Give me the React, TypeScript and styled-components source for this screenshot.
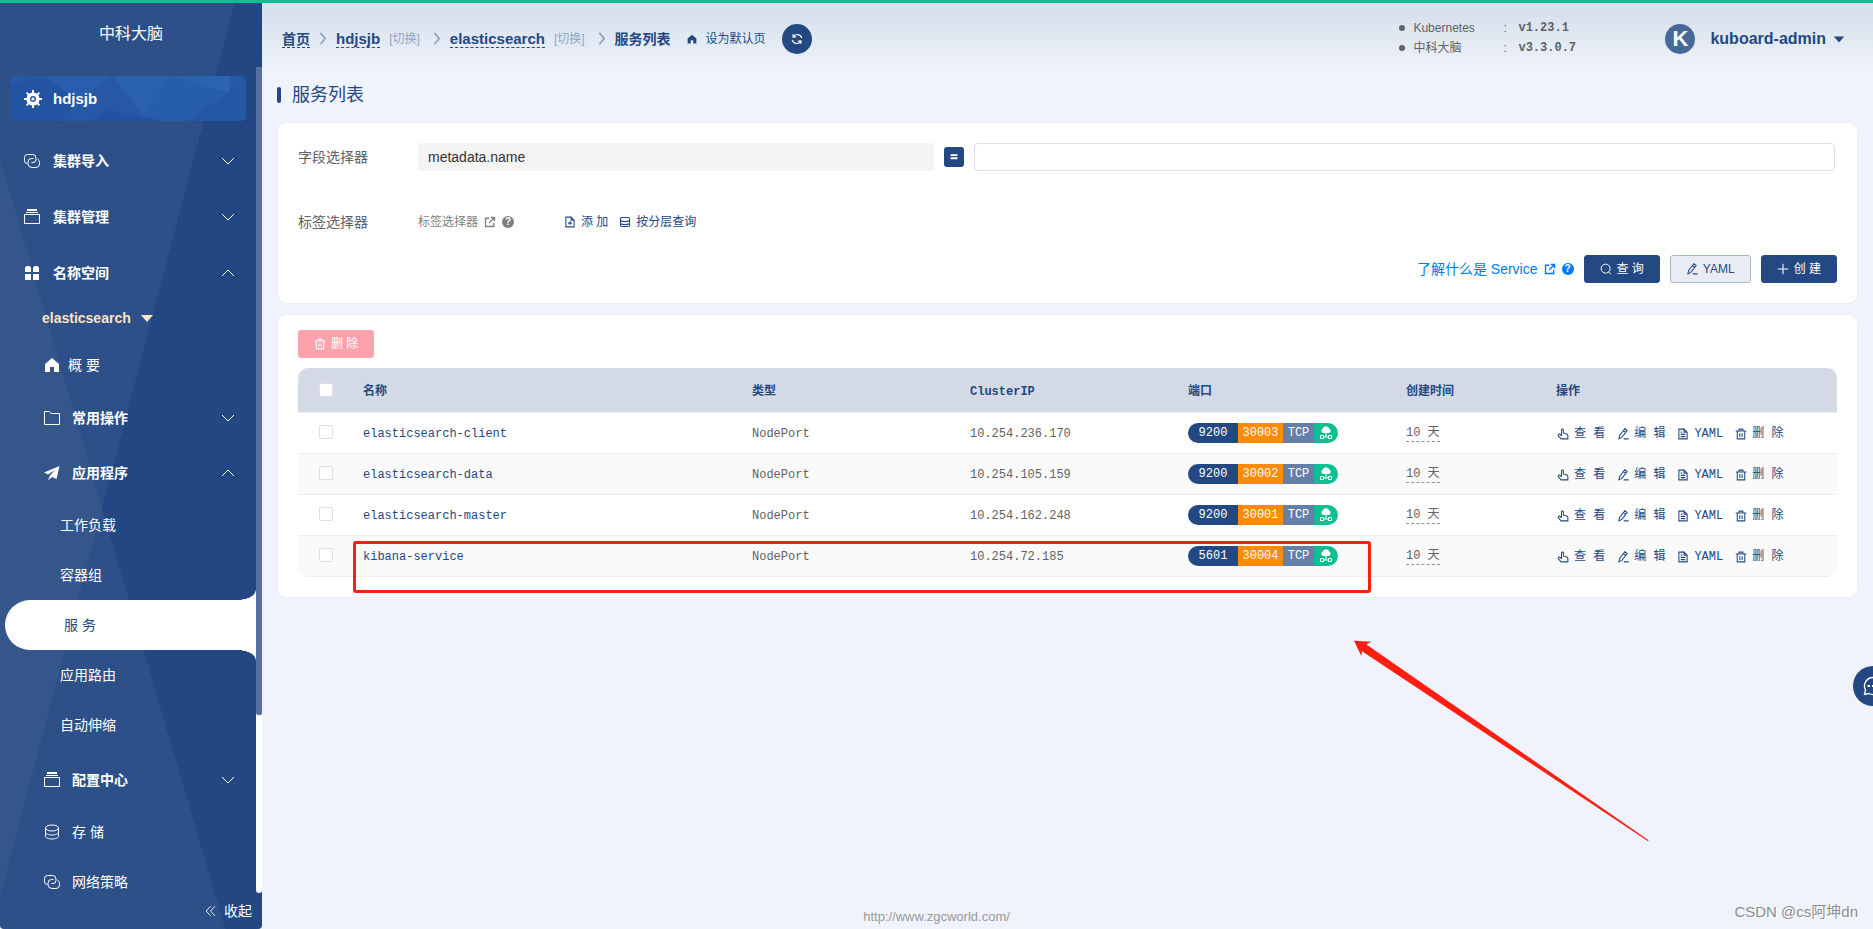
import React from "react";
import styled, { createGlobalStyle, css } from "styled-components";

const SANS = `"Liberation Sans", "Noto Sans CJK SC", sans-serif`;
const MONO = `"Liberation Mono", "Noto Sans CJK SC", monospace`;
const NAVY = "#234882";

const GlobalStyle = createGlobalStyle`
  *, *::before, *::after { box-sizing: border-box; }
  body {
    margin: 0;
    background: #f0f3fb;
    color: #606266;
    font: 14px/20px ${SANS};
  }
  button, input { font: inherit; color: inherit; }
  button { cursor: pointer; }
  a { color: inherit; text-decoration: none; }
  svg { display: block; flex: none; }
`;

/* ---------- icons ---------- */

const paths: Record<string, React.ReactNode> = {
  link: (
    <>
      <path d="M3.5 10.5H3.2A2.7 2.7 0 0 1 .5 7.8V4.5A3 3 0 0 1 3.5 1.5H8.5A3.5 3.5 0 0 1 12 5V6.5A3 3 0 0 1 9 9.5H7.5" />
      <path d="M9.5 5.5H7.5A3.5 3.5 0 0 0 4 9V10.5A4 4 0 0 0 8 14.5H12A3.5 3.5 0 0 0 15.5 11V9.5A4 4 0 0 0 13.5 6" />
    </>
  ),
  stack: (
    <>
      <path d="M3 1h10" strokeWidth="2" />
      <path d="M2 3.5h12M.5 5.5h15v9H.5z" />
    </>
  ),
  grid: (
    <path
      d="M1 7V2.5L2.5 1H5.500L7 2.500V7zM9 7V2.500L10.500 1H13.500L15 2.500V7zM1 9H7V15H1zM9 9H15V15H9z"
      fill="currentColor"
      stroke="none"
    />
  ),
  home: <path d="M8 1 15 7V15H10V10H6V15H1V7z" fill="currentColor" stroke="none" />,
  folder: <path d="M.5 1.500H5.500L7 3.500H15.500V14.500H.5z" />,
  plane: <path d="M15.500 1 0 7.500 4 9.500 11 5 6 10.500 4 15.500 8 12 12.500 14z" fill="currentColor" stroke="none" />,
  database: (
    <>
      <ellipse cx="8" cy="4" rx="6.500" ry="3" />
      <path d="M1.500 4V12C1.500 13.700 4.400 15 8 15S14.500 13.700 14.500 12V4M1.500 8C1.500 9.700 4.400 11 8 11S14.500 9.700 14.500 8" />
    </>
  ),
  down: <path d="M2 5 8 11 14 5" />,
  up: <path d="M2 11 8 5 14 11" />,
  fold: <path d="M7.500 2.500 2.500 8 7.500 13.500M12.500 2.500 7.500 8 12.500 13.500" />,
  caret: <path d="M2 5H14L8 12z" fill="currentColor" stroke="none" />,
  crumb: <path d="M5 1 10.500 7.500 5 14" strokeWidth="2" />,
  refresh: (
    <path
      d="M3.500 6.500V2.500M3.500 5.500A5.500 5.500 0 0 1 13.500 7M3.500 5.500H7M12.500 9.500V13.500M12.500 10.500A5.500 5.500 0 0 1 2.500 9M12.500 10.500H9"
      strokeWidth="1.300"
    />
  ),
  external: <path d="M7 3H2V14H13V9M9 2H14V7M14 2 7 9" strokeWidth="1.800" />,
  docPlus: <path d="M9.500 1.500H2.500V14.500H13.500V5.500L9.500 1.500V5.500H13.500M8 7V12M5.500 9.500H10.500" strokeWidth="1.400" />,
  layers: (
    <path
      d="M2 3.500Q2 2 3.500 2H12.500Q14 2 14 3.500V12.500Q14 14 12.500 14H3.500Q2 14 2 12.500zM2 6.500Q8 8.500 14 6.500M2 10.500Q8 12.500 14 10.500"
      strokeWidth="1.500"
    />
  ),
  search: (
    <path
      d="M7.500 1.500A6 6 0 1 0 7.500 13.500A6 6 0 1 0 7.500 1.500M11.500 12 14.500 15"
      strokeWidth="1.300"
    />
  ),
  pen: <path d="M10.500 1 13.500 3.500 6.500 12.500 2.500 14.500 3.500 10zM8.500 3.500 11.500 6M9 14.500H15.500" strokeWidth="1.400" />,
  plus: <path d="M8 1V15M1 8H15" strokeWidth="1.400" />,
  hand: (
    <path
      d="M6 10.500V2.500Q6 1.200 7.200 1.200T8.500 2.500V6.500L13 8Q14.500 8.500 14.500 10V14.500H5.500L1.500 10Q1.500 8 3.500 8L6 10.500"
      strokeWidth="1.400"
    />
  ),
  doc: <path d="M9.500 1.500H2.500V14.500H13.500V5.500L9.500 1.500V5.500H13.500M5 8.500H11M5 11.500H11M5 5.500H7" strokeWidth="1.400" />,
  trash: <path d="M1 4H15M5.500 4V1.500H10.500V4M3 4V14.500H13V4M6.500 7V12M9.500 7V12" strokeWidth="1.400" />,
  equals: <path d="M2.500 5H13.500M2.500 10H13.500" strokeWidth="3" />,
};

const Icon = ({ name, size = 16 }: { name: string; size?: number }) => (
  <svg width={size} height={size} viewBox="0 0 16 16" fill="none" stroke="currentColor" strokeWidth="1" aria-hidden="true">
    {paths[name]}
  </svg>
);

const Wheel = () => (
  <svg width="18" height="18" viewBox="0 0 18 18" fill="none" stroke="#fff" aria-hidden="true">
    <path d="M9 0V18M0 9H18M2.600 2.600 15.400 15.400M15.400 2.600 2.600 15.400" strokeWidth="2" />
    <circle cx="9" cy="9" r="4.800" fill="#2558a6" strokeWidth="3.600" />
    <circle cx="9" cy="9" r="1.600" fill="#fff" stroke="none" />
  </svg>
);

const CloudNodes = () => (
  <svg width="14" height="14" viewBox="0 0 14 14" fill="#fff" aria-hidden="true">
    <path d="M4.500 7A2.200 2.200 0 0 1 3.600 2.800 3.500 3.500 0 0 1 10.400 2.800 2.200 2.200 0 0 1 9.500 7z" />
    <path d="M7 7V11M4 11H10M1.500 9.500H4.500V12.500H1.500zM9.500 9.500H12.500V12.500H9.500z" fill="none" stroke="#fff" />
  </svg>
);

/* ---------- page frame ---------- */

const Page = styled.div`
  position: relative;
  display: flex;
  flex-direction: column;
  height: 100vh;
  overflow: hidden;
`;

const TopLine = styled.div`
  flex: none;
  height: 3px;
  background: #10bf91;
`;

const Body = styled.div`
  flex: 1;
  min-height: 0;
  display: flex;
`;

/* ---------- sidebar ---------- */

const Sidebar = styled.aside`
  flex: none;
  width: 262px;
  display: flex;
  flex-direction: column;
  color: #fff;
  border-radius: 0 0 4px 4px;
  background: conic-gradient(
    at 102px 505px,
    #2c5087 0 14.7deg,
    #234782 14.7deg 163.7deg,
    #2c5087 163.7deg 194.7deg,
    #34568b 194.7deg 343.7deg,
    #2c5087 343.7deg 360deg
  );
`;

const Brand = styled.div`
  height: 64px;
  line-height: 62px;
  text-align: center;
  font-size: 16px;
`;

const MenuFrame = styled.div`
  flex: 1;
  min-height: 0;
  display: flex;
`;

const Menu = styled.nav`
  flex: 1;
  overflow: hidden;
  padding-top: 9px;
`;

const ScrollTrack = styled.div`
  flex: none;
  width: 6px;
  border-radius: 3px;
  background: #fff;
`;

const ScrollThumb = styled.div`
  height: 78.5%;
  border-radius: 2px;
  background: #57719e;
`;

const ClusterLink = styled.a`
  position: relative;
  display: flex;
  align-items: center;
  height: 45px;
  margin: 0 10px 12px;
  padding: 0 14px;
  border-radius: 5px;
  overflow: hidden;
  font-size: 15px;
  font-weight: 700;
  background: #2659a7;
`;

const Facets = styled.svg`
  position: absolute;
  inset: 0;
  width: 100%;
  height: 100%;
  opacity: 0.7;
`;

const ClusterLabel = styled.span`
  position: relative;
  display: flex;
  align-items: center;
  gap: 11px;
`;

const menuItem = css`
  display: flex;
  align-items: center;
  width: 100%;
  border: 0;
  background: none;
  text-align: left;
`;

const Group = styled.button<{ $nested?: boolean }>`
  ${menuItem}
  height: ${(p) => (p.$nested ? 55 : 56)}px;
  padding: 0 20px 0 ${(p) => (p.$nested ? 44 : 24)}px;
  gap: ${(p) => (p.$nested ? 12 : 13)}px;
  font-weight: 700;

  & > span {
    flex: 1;
  }
`;

const NamespaceSwitch = styled.button`
  ${menuItem}
  gap: 8px;
  height: 39px;
  padding: 0 42px 5px;
  font-weight: 700;
  color: #ffe3c8;
`;

const Leaf = styled.a<{ $gap?: number }>`
  ${menuItem}
  gap: ${(p) => p.$gap ?? 12}px;
  height: 50px;
  padding-left: 44px;
`;

const SubMenu = styled.div`
  padding-bottom: 2px;
`;

const SubLeaf = styled.a`
  ${menuItem}
  height: 50px;
  padding-left: 60px;
`;

const ActiveLeaf = styled(SubLeaf)`
  position: relative;
  width: auto;
  margin-left: 5px;
  padding-left: 59px;
  border-radius: 25px 0 0 25px;
  background: #fff;
  color: ${NAVY};

  &::before,
  &::after {
    content: "";
    position: absolute;
    right: 0;
    width: 18px;
    height: 10px;
  }
  &::before {
    bottom: 100%;
    background: radial-gradient(ellipse 18px 10px at 0 0, transparent 96%, #fff);
  }
  &::after {
    top: 100%;
    background: radial-gradient(ellipse 18px 10px at 0 100%, transparent 96%, #fff);
  }
`;

const FoldButton = styled.button`
  ${menuItem}
  flex: none;
  justify-content: flex-end;
  gap: 6px;
  height: 36px;
  padding: 0 10px 0 0;
`;

/* ---------- header ---------- */

const Main = styled.main`
  flex: 1;
  min-width: 0;
  display: flex;
  flex-direction: column;
`;

const Header = styled.header`
  flex: none;
  display: flex;
  align-items: center;
  height: 72px;
  padding: 0 27px 0 20px;
  color: ${NAVY};
  background: linear-gradient(#d3dfeb, #f0f3fb);
`;

const Crumbs = styled.nav`
  display: flex;
  align-items: center;
  gap: 10px;
  margin-right: auto;
  white-space: nowrap;
`;

const CrumbSep = styled.span`
  margin: 0 -4px;
  color: #8fa5c6;
`;

const Crumb = styled.a<{ $latin?: boolean }>`
  font-size: ${(p) => (p.$latin ? 15 : 14)}px;
  line-height: 16px;
  font-weight: 700;
  border-bottom: 1px dashed ${NAVY};
`;

const CrumbCurrent = styled.span`
  font-weight: 700;
`;

const SwitchButton = styled.button`
  padding: 0;
  margin: 0 4px 0 -1px;
  border: 0;
  background: none;
  font-size: 12px;
  color: #8fa5c6;
`;

const DefaultPageButton = styled.button`
  display: flex;
  align-items: center;
  gap: 9px;
  padding: 0;
  margin: 0 6px;
  border: 0;
  background: none;
  font-size: 12px;
`;

const RoundButton = styled.button`
  display: grid;
  place-items: center;
  width: 30px;
  height: 30px;
  padding: 0;
  border: 0;
  border-radius: 50%;
  background: ${NAVY};
  color: #fff;
`;

const Versions = styled.ul`
  margin: 0;
  padding: 0 0 2px;
  list-style: none;
  font-size: 12px;
  color: #606266;
`;

const VersionRow = styled.li`
  display: grid;
  grid-template-columns: 14px 90px 15px 147px;
  align-items: center;

  &::before {
    content: "";
    width: 6px;
    height: 6px;
    border-radius: 50%;
    background: #606266;
  }
  & > b {
    font-family: ${MONO};
  }
`;

const UserButton = styled.button`
  display: flex;
  align-items: center;
  padding: 0;
  border: 0;
  background: none;
  font-size: 16px;
  font-weight: 700;
  color: ${NAVY};

  & > svg {
    margin-left: 6px;
  }
`;

const Avatar = styled.span`
  width: 30px;
  height: 30px;
  margin-right: 15px;
  border-radius: 50%;
  background: #486998;
  color: #fff;
  font-size: 22px;
  line-height: 30px;
  text-align: center;
`;

/* ---------- content ---------- */

const Content = styled.div`
  flex: 1;
  display: flex;
  flex-direction: column;
  gap: 10px;
  padding: 0 15px;
`;

const Title = styled.h1`
  display: flex;
  align-items: center;
  gap: 11px;
  height: 40px;
  margin: 0 0 -3px;
  font-size: 18px;
  font-weight: 400;
  color: ${NAVY};

  &::before {
    content: "";
    width: 4px;
    height: 16px;
    border-radius: 2px;
    background: ${NAVY};
  }
`;

const Card = styled.section<{ $top?: number }>`
  padding: ${(p) => p.$top ?? 20}px 20px 20px;
  border: 1px solid #ebeef5;
  border-radius: 10px;
  background: #fff;
`;

const FormRow = styled.div<{ $after: number }>`
  display: flex;
  align-items: center;
  height: 28px;
  margin-bottom: ${(p) => p.$after}px;
  padding-right: 2px;
`;

const Label = styled.label`
  flex: none;
  width: 120px;
`;

const FieldPair = styled.div`
  flex: 1;
  display: grid;
  grid-template-columns: minmax(0, 3fr) 20px minmax(0, 5fr);
  align-items: center;
  gap: 10px;
`;

const FieldInput = styled.input`
  height: 28px;
  padding: 0 10px;
  border: 0;
  border-radius: 4px;
  background: #f4f4f4;
  color: #333;
`;

const OperatorButton = styled.button`
  display: grid;
  place-items: center;
  width: 20px;
  height: 20px;
  padding: 0;
  border: 0;
  border-radius: 3px;
  background: ${NAVY};
  color: #fff;
`;

const ValueInput = styled.input`
  height: 28px;
  padding: 0 10px;
  border: 1px solid #dcdfe6;
  border-radius: 4px;
  background: #fff;
`;

const DocLink = styled.a<{ $blue?: boolean }>`
  display: flex;
  align-items: center;
  gap: 6px;
  font-size: ${(p) => (p.$blue ? 14 : 12)}px;
  color: ${(p) => (p.$blue ? "#007af5" : "#808080")};
`;

const HelpDot = styled.span`
  width: 12px;
  height: 12px;
  border-radius: 50%;
  background: ${(p) => p.color};
  color: #fff;
  font-size: 10px;
  font-weight: 700;
  line-height: 12px;
  text-align: center;
`;

const TextButton = styled.button`
  display: flex;
  align-items: center;
  gap: 5px;
  padding: 0;
  border: 0;
  background: none;
  font-size: 12px;
  color: ${NAVY};
`;

const SelectorTools = styled.div`
  display: flex;
  gap: 11px;
  margin-left: 50px;
`;

const Actions = styled.div`
  display: flex;
  align-items: center;
  justify-content: flex-end;
  gap: 10px;
`;

const buttonTones = {
  primary: css`
    border-color: ${NAVY};
    background: ${NAVY};
    color: #fff;
  `,
  plain: css`
    border-color: #a7b6cd;
    background: #e9edf3;
    color: ${NAVY};
  `,
  danger: css`
    border-color: #fba2ac;
    background: #fba2ac;
    color: #fff;
  `,
};

const Button = styled.button<{ $tone: keyof typeof buttonTones }>`
  display: flex;
  align-items: center;
  gap: 5px;
  height: 28px;
  padding: 0 15px;
  border: 1px solid;
  border-radius: 3px;
  font-size: 12px;
  ${(p) => buttonTones[p.$tone]}
`;

const TableFrame = styled.div`
  position: relative;
  margin-top: 10px;
`;

const Table = styled.table`
  width: 100%;
  table-layout: fixed;
  border-spacing: 0;
  border-radius: 10px;
  overflow: hidden;
  font: 12px/20px ${MONO};

  th,
  td {
    padding: 2px 10px 0;
    border-bottom: 1px solid #ebeef5;
    text-align: left;
    white-space: nowrap;
  }
  th {
    height: 45px;
    padding-top: 4px;
    background: #d3d9e5;
    color: ${NAVY};
  }
  td {
    height: 41px;
  }
  tbody tr:nth-child(even) {
    background: #fafafa;
  }
`;

const Col = styled.col<{ $w?: number }>`
  width: ${(p) => (p.$w ? `${p.$w}px` : "auto")};
`;

const Check = styled.input.attrs({ type: "checkbox" })`
  appearance: none;
  display: block;
  width: 14px;
  height: 14px;
  margin: 0 0 4px 11px;
  border: 1px solid #dcdfe6;
  border-radius: 2px;
  background: #fff;
`;

const NameLink = styled.a`
  color: ${NAVY};
`;

const PortBadge = styled.span`
  display: flex;
  width: fit-content;
  height: 20px;
  margin-bottom: 2px;
  border-radius: 10px;
  overflow: hidden;
  color: #fff;
`;

const PortPart = styled.span<{ $w: number; $bg: string }>`
  display: grid;
  place-items: center;
  width: ${(p) => p.$w}px;
  background: ${(p) => p.$bg};
`;

const Age = styled.span`
  display: block;
  width: fit-content;
  line-height: 15px;
  border-bottom: 1px dashed #909399;
`;

const RowActions = styled.div`
  display: flex;
  gap: 12px;
  padding-left: 1px;
`;

const Highlight = styled.div`
  position: absolute;
  left: 55px;
  right: 466px;
  top: 173px;
  height: 52px;
  border: 3px solid #ff1f12;
  border-radius: 3px;
  pointer-events: none;
`;

const Arrow = styled.svg`
  position: absolute;
  right: 188px;
  top: 272px;
  pointer-events: none;
`;

const Footer = styled.footer`
  flex: none;
  padding-right: 262px;
  font-size: 13px;
  line-height: 24px;
  text-align: center;
  color: #999;
`;

const ChatButton = styled(RoundButton)`
  position: absolute;
  right: -20px;
  bottom: 223px;
  width: 40px;
  height: 40px;
`;

const Credit = styled.span`
  position: absolute;
  right: 15px;
  bottom: 7px;
  font-size: 15px;
  color: #8c8d91;
  text-shadow: 1px 1px 0 #fff;
`;

/* ---------- data ---------- */

const services = [
  { name: "elasticsearch-client", ip: "10.254.236.170", port: "9200", node: "30003" },
  { name: "elasticsearch-data", ip: "10.254.105.159", port: "9200", node: "30002" },
  { name: "elasticsearch-master", ip: "10.254.162.248", port: "9200", node: "30001" },
  { name: "kibana-service", ip: "10.254.72.185", port: "5601", node: "30004" },
];

const rowActions = [
  ["hand", "查 看"],
  ["pen", "编 辑"],
  ["doc", "YAML"],
  ["trash", "删 除"],
];

/* ---------- sections ---------- */

const MenuGroup = ({ icon, label, open, nested }: { icon: string; label: string; open?: boolean; nested?: boolean }) => (
  <Group type="button" $nested={nested} aria-expanded={!!open}>
    <Icon name={icon} />
    <span>{label}</span>
    <Icon name={open ? "up" : "down"} />
  </Group>
);

const SideMenu = () => (
  <Sidebar>
    <Brand>中科大脑</Brand>
    <MenuFrame>
      <Menu>
        <ClusterLink href="#cluster">
          <Facets viewBox="0 0 236 45" preserveAspectRatio="none" aria-hidden="true">
            <path d="M34 0 69 25 50 45H0V10z" fill="#2153a0" />
            <path d="M34 0H102L69 25z" fill="#2a61af" />
            <path d="M102 0 134 39 69 25z" fill="#2859a6" />
            <path d="M102 0H160L134 39z" fill="#2b65b1" />
            <path d="M160 0H221L219 17z" fill="#2e6cb5" />
            <path d="M160 0 219 17 176 45H153L134 39z" fill="#2961ae" />
            <path d="M219 17 236 8V45H176z" fill="#2457a4" />
            <path d="M97 34 150 45H80z" fill="#1f509d" />
          </Facets>
          <ClusterLabel>
            <Wheel />
            hdjsjb
          </ClusterLabel>
        </ClusterLink>
        <MenuGroup icon="link" label="集群导入" />
        <MenuGroup icon="stack" label="集群管理" />
        <MenuGroup icon="grid" label="名称空间" open />
        <NamespaceSwitch type="button">
          elasticsearch
          <Icon name="caret" />
        </NamespaceSwitch>
        <Leaf href="#overview" $gap={8}>
          <Icon name="home" />
          概 要
        </Leaf>
        <MenuGroup icon="folder" label="常用操作" nested />
        <MenuGroup icon="plane" label="应用程序" nested open />
        <SubMenu>
          <SubLeaf href="#workloads">工作负载</SubLeaf>
          <SubLeaf href="#pods">容器组</SubLeaf>
          <ActiveLeaf href="#services" aria-current="page">
            服 务
          </ActiveLeaf>
          <SubLeaf href="#ingress">应用路由</SubLeaf>
          <SubLeaf href="#autoscaling">自动伸缩</SubLeaf>
        </SubMenu>
        <MenuGroup icon="stack" label="配置中心" nested />
        <Leaf href="#storage">
          <Icon name="database" />
          存 储
        </Leaf>
        <Leaf href="#network-policy">
          <Icon name="link" />
          网络策略
        </Leaf>
      </Menu>
      <ScrollTrack>
        <ScrollThumb />
      </ScrollTrack>
    </MenuFrame>
    <FoldButton type="button">
      <Icon name="fold" size={14} />
      收起
    </FoldButton>
  </Sidebar>
);

const Sep = () => (
  <CrumbSep>
    <Icon name="crumb" size={14} />
  </CrumbSep>
);

const PageHeader = () => (
  <Header>
    <Crumbs>
      <Crumb href="#home">首页</Crumb>
      <Sep />
      <Crumb href="#cluster" $latin>hdjsjb</Crumb>
      <SwitchButton type="button">[切换]</SwitchButton>
      <Sep />
      <Crumb href="#namespace" $latin>elasticsearch</Crumb>
      <SwitchButton type="button">[切换]</SwitchButton>
      <Sep />
      <CrumbCurrent>服务列表</CrumbCurrent>
      <DefaultPageButton type="button">
        <Icon name="home" size={10} />
        设为默认页
      </DefaultPageButton>
      <RoundButton type="button" aria-label="刷新">
        <Icon name="refresh" size={14} />
      </RoundButton>
    </Crumbs>
    <Versions>
      <VersionRow>
        <span>Kubernetes</span>
        <span>:</span>
        <b>v1.23.1</b>
      </VersionRow>
      <VersionRow>
        <span>中科大脑</span>
        <span>:</span>
        <b>v3.3.0.7</b>
      </VersionRow>
    </Versions>
    <UserButton type="button">
      <Avatar>K</Avatar>
      kuboard-admin
      <Icon name="caret" size={14} />
    </UserButton>
  </Header>
);

const FilterCard = () => (
  <Card>
    <FormRow $after={37}>
      <Label htmlFor="field">字段选择器</Label>
      <FieldPair>
        <FieldInput id="field" readOnly value="metadata.name" />
        <OperatorButton type="button" aria-label="等于">
          <Icon name="equals" size={10} />
        </OperatorButton>
        <ValueInput aria-label="字段值" />
      </FieldPair>
    </FormRow>
    <FormRow $after={19}>
      <Label as="span">标签选择器</Label>
      <DocLink href="#label-selector">
        标签选择器
        <Icon name="external" size={12} />
        <HelpDot color="#808080">?</HelpDot>
      </DocLink>
      <SelectorTools>
        <TextButton type="button">
          <Icon name="docPlus" size={12} />
          添 加
        </TextButton>
        <TextButton type="button">
          <Icon name="layers" size={12} />
          按分层查询
        </TextButton>
      </SelectorTools>
    </FormRow>
    <Actions>
      <DocLink href="#service-docs" $blue>
        了解什么是 Service
        <Icon name="external" size={12} />
        <HelpDot color="#007af5">?</HelpDot>
      </DocLink>
      <Button type="button" $tone="primary">
        <Icon name="search" size={12} />
        查 询
      </Button>
      <Button type="button" $tone="plain">
        <Icon name="pen" size={12} />
        YAML
      </Button>
      <Button type="button" $tone="primary">
        <Icon name="plus" size={12} />
        创 建
      </Button>
    </Actions>
  </Card>
);

const ServiceCard = () => (
  <Card $top={15}>
    <Button type="button" $tone="danger">
      <Icon name="trash" size={12} />
      删 除
    </Button>
    <TableFrame>
      <Table>
        <colgroup>
          <Col $w={55} />
          <Col />
          <Col $w={218} />
          <Col $w={218} />
          <Col $w={218} />
          <Col $w={150} />
          <Col $w={291} />
        </colgroup>
        <thead>
          <tr>
            <th>
              <Check aria-label="全选" />
            </th>
            <th>名称</th>
            <th>类型</th>
            <th>ClusterIP</th>
            <th>端口</th>
            <th>创建时间</th>
            <th>操作</th>
          </tr>
        </thead>
        <tbody>
          {services.map((s) => (
            <tr key={s.name}>
              <td>
                <Check aria-label={s.name} />
              </td>
              <td>
                <NameLink href={`#${s.name}`}>{s.name}</NameLink>
              </td>
              <td>NodePort</td>
              <td>{s.ip}</td>
              <td>
                <PortBadge>
                  <PortPart $w={50} $bg={NAVY}>{s.port}</PortPart>
                  <PortPart $w={45} $bg="#ff8a05">{s.node}</PortPart>
                  <PortPart $w={31} $bg="#657fa8">TCP</PortPart>
                  <PortPart $w={24} $bg="#10bf91">
                    <CloudNodes />
                  </PortPart>
                </PortBadge>
              </td>
              <td>
                <Age>10 天</Age>
              </td>
              <td>
                <RowActions>
                  {rowActions.map(([icon, label]) => (
                    <TextButton type="button" key={label}>
                      <Icon name={icon} size={12} />
                      {label}
                    </TextButton>
                  ))}
                </RowActions>
              </td>
            </tr>
          ))}
        </tbody>
      </Table>
      <Highlight />
      <Arrow width="296" height="202" viewBox="0 0 296 202" aria-hidden="true">
        <path d="M1 .7 18.300 1.700 13.500 4.500 295.600 200.200 295 201.200 9 11.300 8.300 16z" fill="#ff1f12" />
      </Arrow>
    </TableFrame>
  </Card>
);

export default function App() {
  return (
    <>
      <GlobalStyle />
      <Page>
        <TopLine />
        <Body>
          <SideMenu />
          <Main>
            <PageHeader />
            <Content>
              <Title>服务列表</Title>
              <FilterCard />
              <ServiceCard />
            </Content>
            <Footer>
              <a href="http://www.zgcworld.com/">http://www.zgcworld.com/</a>
            </Footer>
          </Main>
        </Body>
        <ChatButton type="button" aria-label="消息">
          <svg width="20" height="20" viewBox="0 0 20 20" fill="none" stroke="#fff" aria-hidden="true">
            <path d="M10 1.500A8.500 8.500 0 0 0 2.500 14L1.500 18.500 6 17.500A8.500 8.500 0 1 0 10 1.500" strokeWidth="1.300" />
            <path d="M4.500 10H7M9 10H11.500M13.500 10H16" strokeWidth="2" />
          </svg>
        </ChatButton>
        <Credit>CSDN @cs阿坤dn</Credit>
      </Page>
    </>
  );
}
